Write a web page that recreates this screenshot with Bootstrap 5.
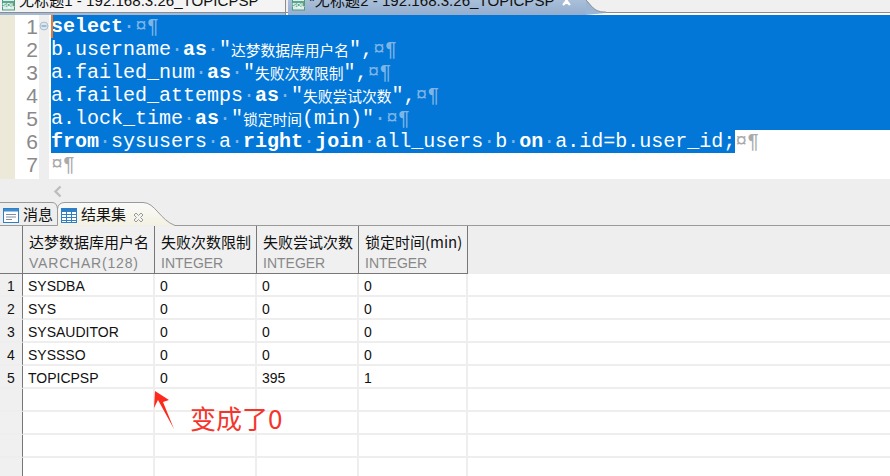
<!DOCTYPE html>
<html lang="zh-CN">
<head>
<meta charset="utf-8">
<title>SQL result</title>
<link href="https://cdn.jsdelivr.net/npm/bootstrap@5.3.0/dist/css/bootstrap.min.css" rel="stylesheet">
<style>
html,body{height:476px;overflow:hidden;background:#fff;margin:0}
body{font-family:"Liberation Sans","Noto Sans CJK SC",sans-serif;position:relative;width:890px}
.strip{height:15px;background:linear-gradient(#f0f0f0 0,#f0f0f0 12px,#8d8d8d 12px,#8d8d8d 13px,#fff 13px);overflow:hidden;line-height:1;color:#111}
.doc-tab{height:15px;display:flex;align-items:flex-start;overflow:hidden;white-space:nowrap;flex:none;position:relative}
.doc-tab.off{width:286px;background:linear-gradient(#f4f4f4 0,#f4f4f4 12px,#8d8d8d 12px,#8d8d8d 13px,#a3bad6 13px);border-right:1px solid #8d8d8d;padding-left:2px}
.doc-tab.on{width:298px;margin-left:2px;background:linear-gradient(#a9bfd9,#94aecf);padding-left:0}
.doc-label{margin-top:-7px;margin-left:4px;font-size:15.1px}
.doc-x{margin-left:6px;margin-top:-5px;flex:none}
.doc-curve{flex:none}
.editor{height:164px;font-family:"Liberation Mono","Noto Sans CJK SC",monospace;font-size:20px;background:#fff}
.code-line{height:23px;line-height:23px}
.gut-a{width:15px;background:#ece9d8;flex:none}
.gut-b{width:24px;font-size:21px;color:#8a8a8a;text-align:right;padding-right:1px;flex:none;font-family:"Liberation Sans",sans-serif;font-weight:400}
.gut-c{width:10px;background:#eee;flex:none;position:relative}
.code-text{margin-left:2px;white-space:pre;color:#222;position:relative}
.sel{background:#0277d8;color:#fff}
.grow-sel{flex:1 1 auto}
.kw{font-weight:700}
.cjk{font-family:"Noto Sans CJK SC",sans-serif;font-size:14.75px;display:inline-block;vertical-align:top}
.ws{color:#7fb5e6}
.ws-w{color:#aaa;white-space:pre;font-family:"Liberation Mono",monospace}
.spare{height:3px}
.caret-bar{position:absolute;left:0;top:0;width:2px;height:23px;background:#f0762a}
.fold-mark{position:absolute;left:0;top:6px}
.hscroll{height:23px;background:#eee;padding:4px 0 0 53px;line-height:1}
.tabbar{height:24px;background:#eee;position:relative;font-size:15px;color:#111}
.tabbar-art{position:absolute;left:0;top:0}
.view-tab{position:relative;height:24px;line-height:25px;white-space:nowrap}
.view-tab.first{width:58px;padding-left:3px}
.view-tab.second{padding-left:3px}
.view-tab svg{vertical-align:-3px;margin-right:4px}
.view-x{margin-left:7px}
.grid-wrap{height:250px;overflow:hidden}
.table.res-grid{table-layout:fixed;border-collapse:separate;border-spacing:0;width:890px;margin:0;font-size:14px;color:#111}
.table.res-grid>:not(caption)>*>*{padding:0 0 0 5px;border:0;background:#fff;box-shadow:none}
.table.res-grid>thead>tr>th{background:#f0f0f0;font-weight:400;height:48px;border-right:1px solid #777;border-bottom:1px solid #777;vertical-align:top;padding:6px 0 0 6px;line-height:20px;color:#111}
.table.res-grid>thead>tr>th.filler{border:0;background:#eee}
.res-grid .cn{display:block;font-size:15px;font-family:"Noto Sans CJK SC",sans-serif;white-space:nowrap}
.res-grid .ty{display:block;color:#888;font-size:14px;white-space:nowrap;margin-top:1px}
.res-grid .ty-wide{letter-spacing:.8px}
.table.res-grid>tbody>tr>td{height:23px;line-height:18px;padding-top:3px;border-right:2px solid #eee;border-bottom:2px solid #eee;color:#111;vertical-align:top}
.table.res-grid>tbody>tr>td.filler{border-right:0}
.table.res-grid>tbody>tr>td.rownum{background:#f0f0f0;padding:3px 0 0;text-align:center;border-right:1px solid #777}
.table.res-grid>thead>tr>th.rownum{padding:0}
.anno{position:absolute;left:190px;top:400px;font-family:"Noto Sans CJK SC",sans-serif;font-size:26px;line-height:36px;color:#f5352b;white-space:nowrap}
.anno-arrow{position:absolute;left:150px;top:388px}
</style>
</head>
<body>
<div class="strip d-flex">
  <div class="doc-tab off">
    <svg width="13" height="13" viewBox="0 0 13 13"><rect x="0.5" y="-3" width="12" height="13" fill="#dfeee7" stroke="#4f9b80"/><rect x="1" y="1" width="11" height="6" fill="#5aa88c"/><text x="6.5" y="6.5" text-anchor="middle" font-size="6" font-weight="700" fill="#fff" font-family="Liberation Sans">SQL</text></svg>
    <span class="doc-label">无标题1 - 192.168.3.26_TOPICPSP</span>
  </div>
  <div class="doc-tab on">
    <svg class="ms-1" width="13" height="13" viewBox="0 0 13 13"><rect x="0.5" y="-3" width="12" height="13" fill="#dfeee7" stroke="#4f9b80"/><rect x="1" y="1" width="11" height="6" fill="#5aa88c"/><text x="6.5" y="6.5" text-anchor="middle" font-size="6" font-weight="700" fill="#fff" font-family="Liberation Sans">SQL</text></svg>
    <span class="doc-label">*无标题2 - 192.168.3.26_TOPICPSP</span>
    <svg class="doc-x" width="11" height="11" viewBox="0 0 11 11"><path d="M2 1 L5.5 4 L9 1 M2 10 L5.5 7 L9 10 M2 1 L9 10 M9 1 L2 10" fill="none" stroke="#fff" stroke-width="2"/></svg>
  </div>
  <svg class="doc-curve" width="20" height="15" viewBox="0 0 20 15"><path d="M0 0 C5 5 8 12 18 12 L20 12 L20 13 L0 15 Z" fill="#9cb5d3"/><path d="M0 0 C5 5 8 12 18 12 L20 12" fill="none" stroke="#8d8d8d"/></svg>
</div>

<div class="editor">
  <div class="code-line d-flex"><span class="gut-a"></span><span class="gut-b">1</span><span class="gut-c"><svg class="fold-mark" width="10" height="10" viewBox="0 0 10 10"><circle cx="5" cy="5" r="4" fill="#dbe6ee" stroke="#a9bfd0"/><path d="M2.5 5H7.5" stroke="#6f8ea5"/></svg></span><span class="code-text sel grow-sel"><span class="caret-bar"></span><span class="kw">select</span><span class="ws">·¤¶</span></span></div>
  <div class="code-line d-flex"><span class="gut-a"></span><span class="gut-b">2</span><span class="gut-c"></span><span class="code-text sel grow-sel">b.username<span class="ws">·</span><span class="kw">as</span><span class="ws">·</span>"<span class="cjk">达梦数据库用户名</span>",<span class="ws">¤¶</span></span></div>
  <div class="code-line d-flex"><span class="gut-a"></span><span class="gut-b">3</span><span class="gut-c"></span><span class="code-text sel grow-sel">a.failed_num<span class="ws">·</span><span class="kw">as</span><span class="ws">·</span>"<span class="cjk">失败次数限制</span>",<span class="ws">¤¶</span></span></div>
  <div class="code-line d-flex"><span class="gut-a"></span><span class="gut-b">4</span><span class="gut-c"></span><span class="code-text sel grow-sel">a.failed_attemps<span class="ws">·</span><span class="kw">as</span><span class="ws">·</span>"<span class="cjk">失败尝试次数</span>",<span class="ws">¤¶</span></span></div>
  <div class="code-line d-flex"><span class="gut-a"></span><span class="gut-b">5</span><span class="gut-c"></span><span class="code-text sel grow-sel">a.lock_time<span class="ws">·</span><span class="kw">as</span><span class="ws">·</span>"<span class="cjk">锁定时间</span>(min)"<span class="ws">·¤¶</span></span></div>
  <div class="code-line d-flex"><span class="gut-a"></span><span class="gut-b">6</span><span class="gut-c"></span><span class="code-text sel"><span class="kw">from</span><span class="ws">·</span>sysusers<span class="ws">·</span>a<span class="ws">·</span><span class="kw">right</span><span class="ws">·</span><span class="kw">join</span><span class="ws">·</span>all_users<span class="ws">·</span>b<span class="ws">·</span><span class="kw">on</span><span class="ws">·</span>a.id=b.user_id;</span><span class="ws-w">¤¶</span></div>
  <div class="code-line d-flex"><span class="gut-a"></span><span class="gut-b">7</span><span class="gut-c"></span><span class="code-text"><span class="ws-w">¤¶</span></span></div>
  <div class="spare d-flex"><span class="gut-a"></span><span class="gut-b"></span><span class="gut-c"></span></div>
</div>

<div class="hscroll"><svg width="10" height="13" viewBox="0 0 10 13"><path d="M7.5 1.5 L2.5 6.5 L7.5 11.5" fill="none" stroke="#bdbdbd" stroke-width="2.4"/></svg></div>

<div class="tabbar d-flex">
  <svg class="tabbar-art" width="890" height="24" viewBox="0 0 890 24">
    <defs><linearGradient id="tg" x1="0" y1="0" x2="0" y2="1"><stop offset="0" stop-color="#fafafa"/><stop offset="1" stop-color="#f3f1e1"/></linearGradient></defs>
    <path d="M57.500 23.500 V7 Q57.500 0.500 65 0.500 H143 C155 0.500 160 18 175 23.500 Z" fill="url(#tg)"/>
    <path d="M0 0.500 H52 Q57 0.500 57.500 7 V23.500 M0 23.500 H57.500 M57.500 7 Q58 0.500 65 0.500 H143 C155 0.500 160 18 175 23.500 H890" fill="none" stroke="#9a9a9a"/>
  </svg>
  <div class="view-tab first"><svg width="16" height="15" viewBox="0 0 16 15"><rect x="0.5" y="0.5" width="15" height="14" fill="#fff" stroke="#2f7fc6"/><rect x="1" y="1" width="14" height="2.5" fill="#3d8bd0"/><path d="M3 6.5H13M3 9H13M3 11.5H9" stroke="#7f8f9f"/></svg>消息</div>
  <div class="view-tab second"><svg width="16" height="15" viewBox="0 0 16 15"><rect x="0.5" y="0.5" width="15" height="14" fill="#fff" stroke="#2f7fc6"/><rect x="1" y="1" width="14" height="3" fill="#2f7fc6"/><path d="M1 6.5H15M1 9.5H15M1 12.5H15M5.5 1V14M10.5 1V14" stroke="#2f7fc6"/></svg>结果集<svg class="view-x" width="11" height="11" viewBox="0 0 11 11"><path d="M1 3 L3 1 L5.500 3.500 L8 1 L10 3 L7.500 5.500 L10 8 L8 10 L5.500 7.500 L3 10 L1 8 L3.500 5.500 Z" fill="#f4f4f0" stroke="#999" stroke-width="1"/></svg></div>
</div>

<div class="grid-wrap">
<table class="table res-grid">
  <colgroup><col style="width:23px"><col style="width:132px"><col style="width:102px"><col style="width:102px"><col style="width:109px"><col></colgroup>
  <thead>
    <tr><th class="rownum"></th>
      <th><span class="cn">达梦数据库用户名</span><span class="ty ty-wide">VARCHAR(128)</span></th>
      <th><span class="cn">失败次数限制</span><span class="ty">INTEGER</span></th>
      <th><span class="cn">失败尝试次数</span><span class="ty">INTEGER</span></th>
      <th><span class="cn">锁定时间(min)</span><span class="ty">INTEGER</span></th>
      <th class="filler"></th></tr>
  </thead>
  <tbody>
    <tr><td class="rownum">1</td><td>SYSDBA</td><td>0</td><td>0</td><td>0</td><td class="filler"></td></tr>
    <tr><td class="rownum">2</td><td>SYS</td><td>0</td><td>0</td><td>0</td><td class="filler"></td></tr>
    <tr><td class="rownum">3</td><td>SYSAUDITOR</td><td>0</td><td>0</td><td>0</td><td class="filler"></td></tr>
    <tr><td class="rownum">4</td><td>SYSSSO</td><td>0</td><td>0</td><td>0</td><td class="filler"></td></tr>
    <tr><td class="rownum">5</td><td>TOPICPSP</td><td>0</td><td>395</td><td>1</td><td class="filler"></td></tr>
    <tr><td class="rownum"></td><td></td><td></td><td></td><td></td><td class="filler"></td></tr>
    <tr><td class="rownum"></td><td></td><td></td><td></td><td></td><td class="filler"></td></tr>
    <tr><td class="rownum"></td><td></td><td></td><td></td><td></td><td class="filler"></td></tr>
    <tr><td class="rownum"></td><td></td><td></td><td></td><td></td><td class="filler"></td></tr>
  </tbody>
</table>
</div>

<svg class="anno-arrow" width="30" height="45" viewBox="150 388 30 45"><path d="M155 391 L169 400 L163 402 L174 429 L158 400 L154 408 Z" fill="#fb2a1c"/></svg>
<div class="anno">变成了0</div>
<script src="https://cdn.jsdelivr.net/npm/bootstrap@5.3.0/dist/js/bootstrap.bundle.min.js"></script>
</body>
</html>
